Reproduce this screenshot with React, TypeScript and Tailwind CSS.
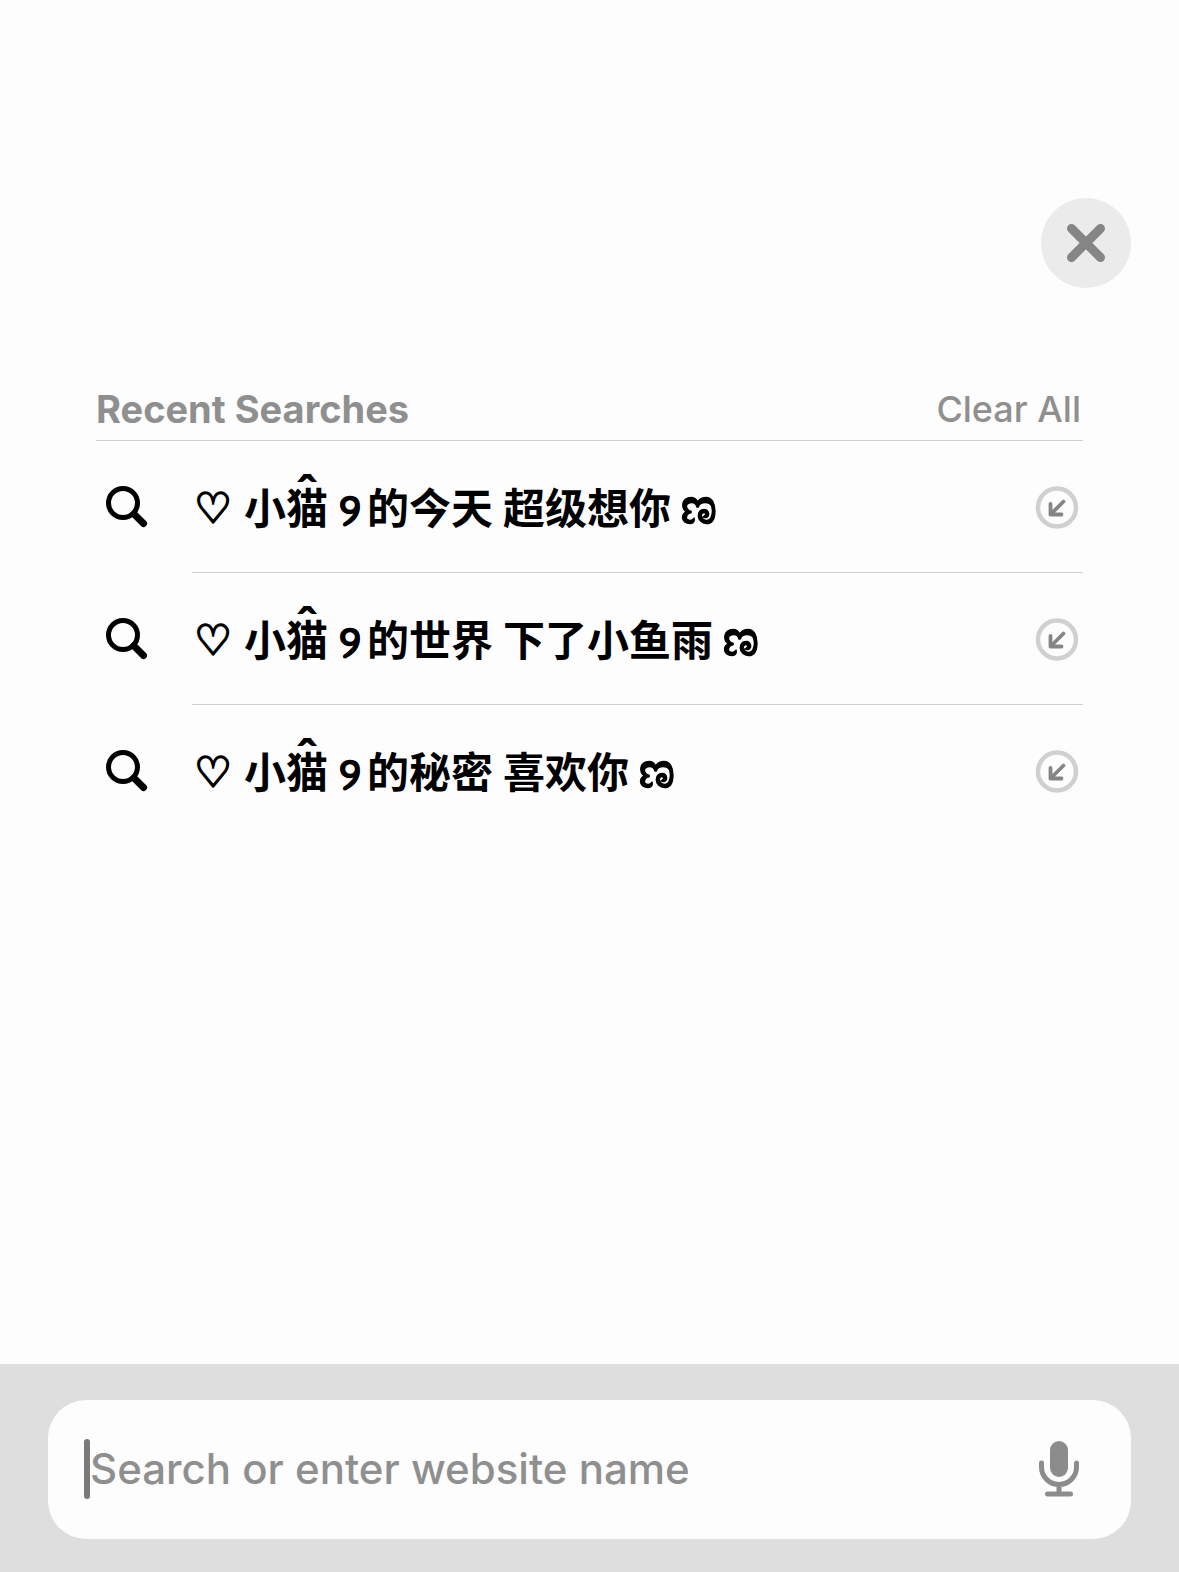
const searches = [
  { subject: '今天', phrase: '超级想你' },
  { subject: '世界', phrase: '下了小鱼雨' },
  { subject: '秘密', phrase: '喜欢你' },
];

function SearchIcon() {
  return (
    <svg viewBox="0 0 42 42" className="size-[42px] shrink-0" fill="none" stroke="currentColor" aria-hidden="true">
      <circle cx="17" cy="17" r="14.5" strokeWidth="5" />
      <path d="M28 28 37.5 37.5" strokeWidth="7" strokeLinecap="round" />
    </svg>
  );
}

function FillIcon() {
  return (
    <svg viewBox="0 0 44 44" className="size-11" fill="none" aria-hidden="true">
      <circle cx="22" cy="22.5" r="19" stroke="#d0d0d0" strokeWidth="4.5" />
      <path d="M28.5 16.5 15.5 29.5M15.5 19v10.5H26.5" stroke="#858585" strokeWidth="3.8" strokeLinecap="round" strokeLinejoin="round" />
    </svg>
  );
}

function MicIcon() {
  return (
    <svg viewBox="0 0 40 56" className="h-14 w-10" fill="none" stroke="#8c8c8c" strokeLinecap="round" aria-hidden="true">
      <rect x="11" y="0" width="18" height="36" rx="9" fill="#8c8c8c" stroke="none" />
      <path d="M2.5 22v4a17.5 17.5 0 0 0 35 0v-4M20 44v9M8.5 53h23" strokeWidth="5" />
    </svg>
  );
}

export default function App() {
  return (
    <div className="flex min-h-screen flex-col bg-[#fdfdfd] font-['Inter','Noto_Sans_CJK_SC',sans-serif]">
      <header className="flex justify-end px-12 pt-[198px]">
        <button type="button" aria-label="Close" className="flex size-[90px] items-center justify-center rounded-full bg-[#ebebeb]">
          <svg viewBox="0 0 38 38" className="size-[38px]" stroke="#858585" strokeWidth="9" strokeLinecap="round" aria-hidden="true">
            <path d="M4.5 4.5l29 29M33.5 4.5l-29 29" />
          </svg>
        </button>
      </header>

      <main className="flex-1 px-24 pt-24">
        <div className="flex h-[57px] items-center justify-between border-b border-[#cfcfcf] pr-0.5 pb-[6px] text-[#8f8f8f]">
          <h2 className="text-[38px] font-bold">Recent Searches</h2>
          <button type="button" className="text-[36px] font-medium">Clear All</button>
        </div>

        {/* Recent searches */}
        <ul>
          {searches.map((search) => (
            <li key={search.subject} className="group flex items-center pl-[10px]">
              <SearchIcon />
              <div className="ml-11 flex h-[132px] flex-1 items-center justify-between border-b border-[#cfcfcf] pr-1 group-last:border-transparent">
                <a href="#" className="flex items-center gap-2.5 pt-1 text-[42px] font-bold text-black">
                  <span className="w-[42px] text-center font-['DejaVu_Sans',sans-serif] font-normal [-webkit-text-stroke:2px_black]">♡</span>
                  <span>
                    小
                    <span className="relative">
                      猫
                      <span className="absolute -top-[14px] left-0 w-full text-center font-['Noto_Sans',sans-serif] text-[48px] leading-none">ˆ</span>
                    </span>
                  </span>
                  <span className="-mr-[5px] w-6 text-center text-[44px] leading-none [-webkit-text-stroke:1px_black]">୨</span>
                  <span>的{search.subject}</span>
                  <span>{search.phrase}</span>
                  <span className="pb-2 text-[50px] leading-none [-webkit-text-stroke:1px_black]">ಣ</span>
                </a>
                <button type="button" aria-label="Use this search">
                  <FillIcon />
                </button>
              </div>
            </li>
          ))}
        </ul>
      </main>

      {/* Address bar */}
      <footer className="bg-[#dedede] px-12 pt-9 pb-[33px]">
        <div className="flex h-[139px] items-center rounded-[38px] bg-[#fdfdfd] pr-[52px] pb-[2px] pl-9">
          <span className="h-[60px] w-[6px] shrink-0 rounded-full bg-[#7a7a7a]" />
          <input
            type="text"
            aria-label="Address"
            placeholder="Search or enter website name"
            className="min-w-0 flex-1 text-[42px] font-medium outline-none placeholder:text-[#8f8f8f]"
          />
          <button type="button" aria-label="Voice search">
            <MicIcon />
          </button>
        </div>
      </footer>
    </div>
  );
}
